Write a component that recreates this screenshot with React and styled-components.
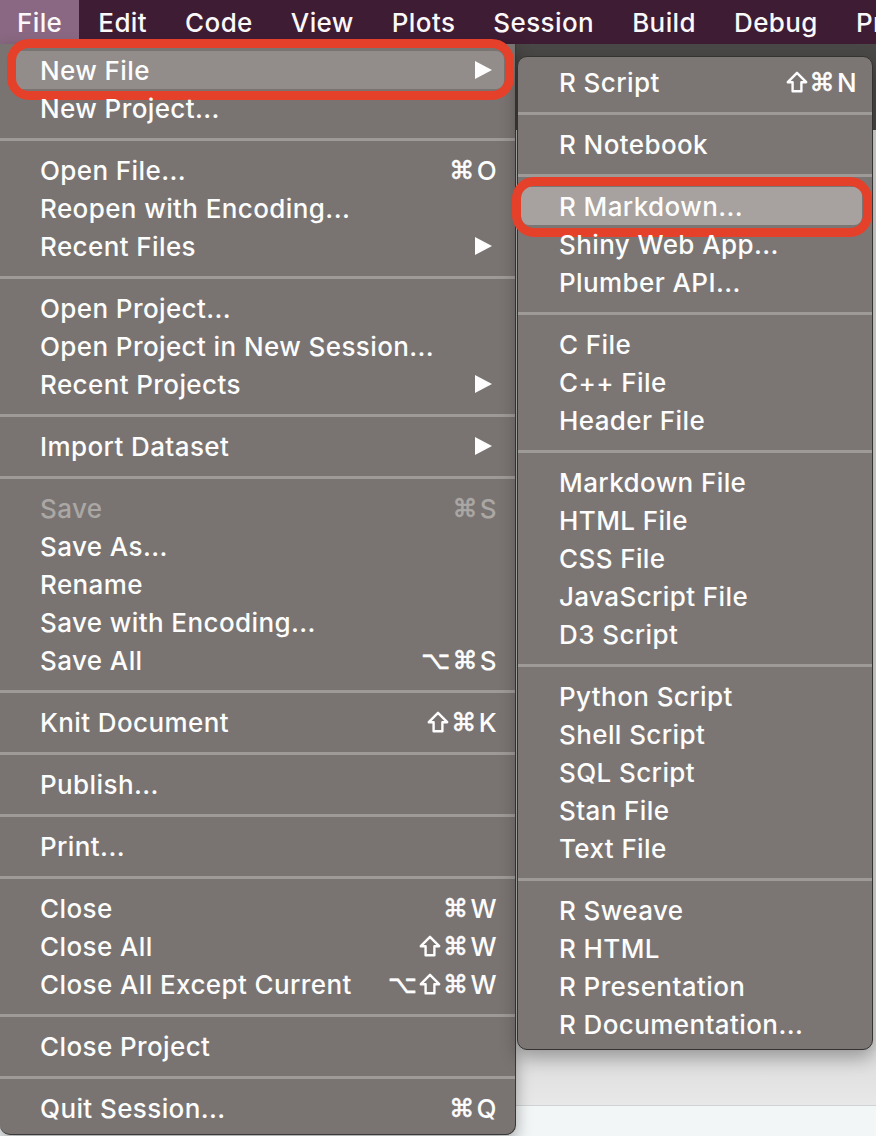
import React from 'react';
import styled, { createGlobalStyle, css } from 'styled-components';

const GlobalStyle = createGlobalStyle`
  html, body {
    margin: 0;
    padding: 0;
    background: #f3f6f7;
  }
  body {
    font-family: "Inter", "DejaVu Sans", "Liberation Sans", sans-serif;
    -webkit-font-smoothing: antialiased;
  }
`;

const fileMenu = [
  { label: 'New File', submenu: true, active: true, ring: true },
  { label: 'New Project...' },
  'sep',
  { label: 'Open File...', keys: '⌘O' },
  { label: 'Reopen with Encoding...' },
  { label: 'Recent Files', submenu: true },
  'sep',
  { label: 'Open Project...' },
  { label: 'Open Project in New Session...' },
  { label: 'Recent Projects', submenu: true },
  'sep',
  { label: 'Import Dataset', submenu: true },
  'sep',
  { label: 'Save', keys: '⌘S', disabled: true },
  { label: 'Save As...' },
  { label: 'Rename' },
  { label: 'Save with Encoding...' },
  { label: 'Save All', keys: '⌥⌘S' },
  'sep',
  { label: 'Knit Document', keys: '⇧⌘K' },
  'sep',
  { label: 'Publish...' },
  'sep',
  { label: 'Print...' },
  'sep',
  { label: 'Close', keys: '⌘W' },
  { label: 'Close All', keys: '⇧⌘W' },
  { label: 'Close All Except Current', keys: '⌥⇧⌘W' },
  'sep',
  { label: 'Close Project' },
  'sep',
  { label: 'Quit Session...', keys: '⌘Q' },
];

const newFileMenu = [
  { label: 'R Script', keys: '⇧⌘N' },
  'sep',
  { label: 'R Notebook' },
  'sep',
  { label: 'R Markdown...', active: true, ring: true },
  { label: 'Shiny Web App...' },
  { label: 'Plumber API...' },
  'sep',
  { label: 'C File' },
  { label: 'C++ File' },
  { label: 'Header File' },
  'sep',
  { label: 'Markdown File' },
  { label: 'HTML File' },
  { label: 'CSS File' },
  { label: 'JavaScript File' },
  { label: 'D3 Script' },
  'sep',
  { label: 'Python Script' },
  { label: 'Shell Script' },
  { label: 'SQL Script' },
  { label: 'Stan File' },
  { label: 'Text File' },
  'sep',
  { label: 'R Sweave' },
  { label: 'R HTML' },
  { label: 'R Presentation' },
  { label: 'R Documentation...' },
];

const menuTitles = ['File', 'Edit', 'Code', 'View', 'Plots', 'Session', 'Build', 'Debug', 'Profile'];

const Page = styled.div`
  position: relative;
  width: 876px;
  height: 1136px;
  overflow: hidden;
  display: flex;
  flex-direction: column;
`;

const MenuBar = styled.div`
  display: flex;
  height: 44px;
  flex-shrink: 0;
  background: #3e1c33;
  white-space: nowrap;
`;

const MenuTitle = styled.div`
  display: flex;
  align-items: center;
  padding: 0 ${p => (p.$open ? 17 : 19)}px;
  font-size: 26px;
  font-weight: 500;
  letter-spacing: 0.4px;
  color: #fbf8fa;
  background: ${p => (p.$open ? '#8a6883' : 'transparent')};
`;

const Workspace = styled.div`
  flex: 1;
  display: grid;
  grid-template-rows: 86px 1fr 54px 1px 30px;
`;

const Toolbar = styled.div`
  background: #4a4847;
`;

const Editor = styled.div`
  background: #d9d9d9;
`;

const PaneHeader = styled.div`
  background: linear-gradient(#dcdcdc, #e8e8e8);
`;

const PaneRule = styled.div`
  background: #d0d3d4;
`;

const Console = styled.div`
  background: #f3f6f7;
`;

const MenuLayer = styled.div`
  position: absolute;
  top: 44px;
  left: 0;
  display: flex;
  align-items: flex-start;
`;

const Dropdown = styled.div`
  width: 515px;
  padding: 7px 0;
  background: #797472;
  border-right: 1px solid #3b3938;
  border-bottom: 1px solid #3b3938;
  border-radius: 0 0 10px 10px;
  box-shadow: 0 6px 16px rgba(0, 0, 0, 0.35);
`;

const Submenu = styled.div`
  width: 354px;
  margin: 12px 0 0 1px;
  padding: 6px 0;
  background: #7b7674;
  border: 1px solid #353332;
  border-radius: 10px;
  box-shadow: 0 8px 18px rgba(0, 0, 0, 0.3);
`;

const Item = styled.div`
  position: relative;
  display: flex;
  align-items: center;
  justify-content: space-between;
  height: 38px;
  margin: ${p => p.$margin};
  padding: ${p => p.$padding};
  border-radius: 8px;
  font-size: 26px;
  font-weight: 500;
  letter-spacing: 0.4px;
  white-space: nowrap;
  color: ${p => (p.$disabled ? '#aba7a5' : '#fdfdfd')};
  background: ${p => (p.$active ? p.$activeBg : 'transparent')};

  ${p =>
    p.$ring &&
    css`
      &::after {
        content: '';
        position: absolute;
        inset: ${p.$ring};
        border: 9px solid #e5402a;
        border-radius: 22px;
        pointer-events: none;
      }
    `}
`;

const Keys = styled.span`
  display: flex;
  align-items: center;
  gap: 2px;
  color: inherit;
`;

const Glyph = styled.span`
  font-family: ${p => (p.$symbol ? '"DejaVu Sans", sans-serif' : '"Inter", sans-serif')};
  font-size: ${p => (p.$symbol ? 25 : 26)}px;
  font-weight: ${p => (p.$symbol ? 400 : 500)};
  -webkit-text-stroke: ${p => (p.$symbol ? '0.6px currentColor' : '0')};
`;

const Separator = styled.div`
  height: 24px;
  display: flex;
  align-items: center;

  &::after {
    content: '';
    flex: 1;
    height: 3px;
    background: #9e9a98;
  }
`;

const Arrow = () => (
  <svg width="18" height="18" viewBox="0 0 18 18" style={{ marginRight: 5 }}>
    <polygon points="1,0 18,9 1,18" fill="#fdfdfd" />
  </svg>
);

// hollow shift arrow, drawn since the font's ⇧ is too thin
const ShiftKey = () => (
  <svg width="22" height="22" viewBox="0 0 22 22">
    <path
      d="M11 1.8 L20.2 11.2 H15.4 V20.2 H6.6 V11.2 H1.8 Z"
      fill="none"
      stroke="currentColor"
      strokeWidth="2.4"
      strokeLinejoin="round"
    />
  </svg>
);

const Shortcut = ({ keys }) => (
  <Keys>
    {[...keys].map((k, i) =>
      k === '⇧' ? (
        <ShiftKey key={i} />
      ) : (
        <Glyph key={i} $symbol={/[⌘⌥]/.test(k)}>
          {k}
        </Glyph>
      )
    )}
  </Keys>
);

const MenuList = ({ items, variant }) =>
  items.map((it, i) => {
    if (it === 'sep') return <Separator key={i} />;
    const left = variant === 'left';
    return (
      <Item
        key={i}
        $margin={left ? '0 11px 0 10px' : '0 10px 0 3px'}
        $padding={left ? '0 7px 0 30px' : '0 5px 0 38px'}
        $active={it.active}
        $activeBg={left ? '#928d8a' : '#a7a29f'}
        $disabled={it.disabled}
        $ring={it.ring ? (left ? '-12px -10px -11px -3px' : '-10px -10px -12px -9px') : null}
      >
        <span>{it.label}</span>
        {it.keys && <Shortcut keys={it.keys} />}
        {it.submenu && <Arrow />}
      </Item>
    );
  });

export default function App() {
  return (
    <>
      <GlobalStyle />
      <Page>
        <MenuBar>
          {menuTitles.map((t, i) => (
            <MenuTitle key={t} $open={i === 0}>
              {t}
            </MenuTitle>
          ))}
        </MenuBar>
        <Workspace>
          <Toolbar />
          <Editor />
          <PaneHeader />
          <PaneRule />
          <Console />
        </Workspace>
        <MenuLayer>
          <Dropdown>
            <MenuList items={fileMenu} variant="left" />
          </Dropdown>
          <Submenu>
            <MenuList items={newFileMenu} variant="right" />
          </Submenu>
        </MenuLayer>
      </Page>
    </>
  );
}
